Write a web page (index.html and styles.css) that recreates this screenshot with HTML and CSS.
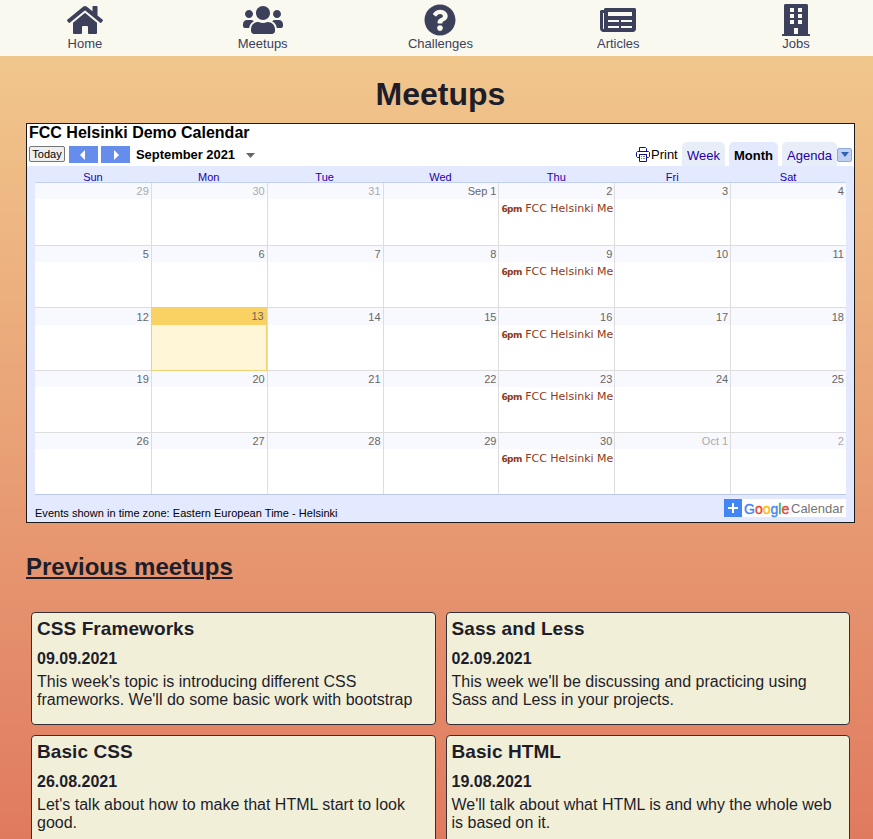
FILE: index.html
```html
<!DOCTYPE html>
<html lang="en">
<head>
<meta charset="utf-8">
<title>Meetups</title>
<link rel="stylesheet" href="styles.css">
</head>
<body>
<nav class="nav">
  <a class="nav-item"><svg viewBox="0 0 576 512" width="36" height="32"><path d="M280.37 148.26L96 300.11V464a16 16 0 0 0 16 16l112.06-.29a16 16 0 0 0 15.92-16V368a16 16 0 0 1 16-16h64a16 16 0 0 1 16 16v95.64a16 16 0 0 0 16 16.05L464 480a16 16 0 0 0 16-16V300L295.67 148.26a12.19 12.19 0 0 0-15.3 0zM571.6 251.47L488 182.56V44.05a12 12 0 0 0-12-12h-56a12 12 0 0 0-12 12v72.61L318.47 43a48 48 0 0 0-61 0L4.34 251.47a12 12 0 0 0-1.6 16.9l25.5 31A12 12 0 0 0 45.15 301l235.22-193.74a12.19 12.19 0 0 1 15.3 0L530.9 301a12 12 0 0 0 16.9-1.6l25.5-31a12 12 0 0 0-1.7-16.93z"/></svg><span>Home</span></a>
  <a class="nav-item"><svg viewBox="0 0 640 512" width="40" height="32"><path d="M96 224c35.3 0 64-28.7 64-64s-28.7-64-64-64-64 28.7-64 64 28.7 64 64 64zm448 0c35.3 0 64-28.7 64-64s-28.7-64-64-64-64 28.7-64 64 28.7 64 64 64zm32 32h-64c-17.6 0-33.5 7.1-45.1 18.6 40.3 22.1 68.9 62 75.1 109.4h66c17.7 0 32-14.3 32-32v-32c0-35.3-28.7-64-64-64zm-256 0c61.9 0 112-50.1 112-112S381.9 32 320 32 208 82.1 208 144s50.1 112 112 112zm76.8 32h-8.3c-20.8 10-43.9 16-68.5 16s-47.6-6-68.5-16h-8.3C179.6 288 128 339.6 128 403.2V432c0 26.5 21.5 48 48 48h288c26.5 0 48-21.5 48-48v-28.8c0-63.6-51.6-115.2-115.2-115.2zm-223.7-13.4C161.5 263.1 145.6 256 128 256H64c-35.3 0-64 28.7-64 64v32c0 17.7 14.3 32 32 32h65.9c6.3-47.4 34.9-87.3 75.2-109.4z"/></svg><span>Meetups</span></a>
  <a class="nav-item"><svg viewBox="0 0 512 512" width="32" height="32"><path d="M504 256c0 136.997-111.043 248-248 248S8 392.997 8 256C8 119.083 119.043 8 256 8s248 111.083 248 248zM262.655 90c-54.497 0-89.255 22.957-116.549 63.758-3.536 5.286-2.353 12.415 2.715 16.258l34.699 26.31c5.205 3.947 12.621 3.008 16.665-2.122 17.864-22.658 30.113-35.797 57.303-35.797 20.429 0 45.698 13.148 45.698 32.958 0 14.976-12.363 22.667-32.534 33.976C247.128 238.528 216 254.941 216 296v4c0 6.627 5.373 12 12 12h56c6.627 0 12-5.373 12-12v-1.333c0-28.462 83.186-29.647 83.186-106.667 0-58.002-60.165-102-116.531-102zM256 338c-25.365 0-46 20.635-46 46 0 25.364 20.635 46 46 46s46-20.636 46-46c0-25.365-20.635-46-46-46z"/></svg><span>Challenges</span></a>
  <a class="nav-item"><svg viewBox="0 0 576 512" width="36" height="32"><path d="M552 64H88c-13.255 0-24 10.745-24 24v8H24c-13.255 0-24 10.745-24 24v272c0 30.928 25.072 56 56 56h472c26.51 0 48-21.49 48-48V88c0-13.255-10.745-24-24-24zM56 400a8 8 0 0 1-8-8V144h16v248a8 8 0 0 1-8 8zM292 384H128v-32h176v32zM512 384H336v-32h176v32zM304 288H128v-32h176v32zM512 288H336v-32h176v32zM512 192H128v-64h384v64z" fill-rule="evenodd"/></svg><span>Articles</span></a>
  <a class="nav-item"><svg viewBox="0 0 448 512" width="28" height="32"><path d="M436 480h-20V24c0-13.255-10.745-24-24-24H56C42.745 0 32 10.745 32 24v456H12c-6.627 0-12 5.373-12 12v20h448v-20c0-6.627-5.373-12-12-12zM128 64h64v64h-64zM128 160h64v64h-64zM128 256h64v64h-64zM256 480h-64v-96h64zM320 320h-64v-64h64zM320 224h-64v-64h64zM320 128h-64V64h64z" fill-rule="evenodd"/></svg><span>Jobs</span></a>
</nav>
<main class="main">
  <h1>Meetups</h1>
  <section class="calendar">
    <div class="cal-title">FCC Helsinki Demo Calendar</div>
    <div class="toolbar">
      <span class="today-btn">Today</span>
      <span class="arrow"><svg width="29" height="17"><path d="M16 4v10l-5-5z"/></svg></span>
      <span class="arrow"><svg width="29" height="17"><path d="M13 4v10l5-5z"/></svg></span>
      <b class="range">September 2021</b>
      <svg class="caret" width="9" height="5"><path d="M0 0h9L4.500 5z"/></svg>
      <svg class="printer" width="14" height="15" viewBox="0 0 14 15"><path class="tray" d="M5 9.500h1m1 0h2M5 11.500h1m1 0h2"/><path d="M3.500 4.500v-4h6l1 1v3M3 10.500H1.500l-1-1v-4l1-1h11l1 1v4l-1 1H11M3 7.500h8M3.500 8v6.500h7V8"/></svg>
      <span class="print">Print</span>
      <span class="tab week">Week</span>
      <span class="tab month">Month</span>
      <span class="tab agenda">Agenda</span>
      <span class="drop"><svg width="8" height="5"><path d="M0 0h8L4 5z"/></svg></span>
    </div>
    <div class="cal-body">
      <div class="weekdays"><span>Sun</span><span>Mon</span><span>Tue</span><span>Wed</span><span>Thu</span><span>Fri</span><span>Sat</span></div>
      <div class="grid">
        <div class="day other"><p>29</p></div><div class="day other"><p>30</p></div><div class="day other"><p>31</p></div><div class="day"><p>Sep 1</p></div><div class="day"><p>2</p><div class="event"><b>6pm</b> FCC Helsinki Me</div></div><div class="day"><p>3</p></div><div class="day"><p>4</p></div>
        <div class="day"><p>5</p></div><div class="day"><p>6</p></div><div class="day"><p>7</p></div><div class="day"><p>8</p></div><div class="day"><p>9</p><div class="event"><b>6pm</b> FCC Helsinki Me</div></div><div class="day"><p>10</p></div><div class="day"><p>11</p></div>
        <div class="day"><p>12</p></div><div class="day current"><p>13</p></div><div class="day"><p>14</p></div><div class="day"><p>15</p></div><div class="day"><p>16</p><div class="event"><b>6pm</b> FCC Helsinki Me</div></div><div class="day"><p>17</p></div><div class="day"><p>18</p></div>
        <div class="day"><p>19</p></div><div class="day"><p>20</p></div><div class="day"><p>21</p></div><div class="day"><p>22</p></div><div class="day"><p>23</p><div class="event"><b>6pm</b> FCC Helsinki Me</div></div><div class="day"><p>24</p></div><div class="day"><p>25</p></div>
        <div class="day"><p>26</p></div><div class="day"><p>27</p></div><div class="day"><p>28</p></div><div class="day"><p>29</p></div><div class="day"><p>30</p><div class="event"><b>6pm</b> FCC Helsinki Me</div></div><div class="day other"><p>Oct 1</p></div><div class="day other"><p>2</p></div>
      </div>
      <div class="cal-footer">
        <span class="zone">Events shown in time zone: Eastern European Time - Helsinki</span>
        <span class="badge"><svg width="18" height="18"><path d="M9 4v10M4 9h10"/></svg><span class="google"><i class="b">G</i><i class="r">o</i><i class="y">o</i><i class="b">g</i><i class="g">l</i><i class="r">e</i></span><span class="word">Calendar</span></span>
      </div>
    </div>
  </section>
  <h2>Previous meetups</h2>
  <section class="cards">
    <article class="card"><h3>CSS Frameworks</h3><h4>09.09.2021</h4><p>This week's topic is introducing different CSS frameworks. We'll do some basic work with bootstrap</p></article>
    <article class="card"><h3>Sass and Less</h3><h4>02.09.2021</h4><p>This week we'll be discussing and practicing using Sass and Less in your projects.</p></article>
    <article class="card"><h3>Basic CSS</h3><h4>26.08.2021</h4><p>Let's talk about how to make that HTML start to look good.</p></article>
    <article class="card"><h3>Basic HTML</h3><h4>19.08.2021</h4><p>We'll talk about what HTML is and why the whole web is based on it.</p></article>
  </section>
</main>
</body>
</html>
```
FILE: styles.css
```css
* { box-sizing: border-box; margin: 0; padding: 0; }
body {
  height: 839px;
  overflow: hidden;
  font-family: "Liberation Sans", Arial, sans-serif;
  color: #1d1e2a;
  background: linear-gradient(#f2cc8f, #e07a5f);
}
.nav {
  display: grid;
  grid-template-columns: repeat(5, 177.8px);
  height: 56px;
  padding-top: 4px;
  background: #f9f9f0;
}
.nav-item { display: flex; flex-direction: column; align-items: center; margin-left: -4px; margin-right: 4px; color: #3d405b; font-size: 13px; line-height: 15px; }
.nav-item svg { display: block; fill: #3d405b; }
.main { padding: 0 18px 0 26px; }
h1 { font-size: 32px; line-height: 36px; text-align: center; padding: 20px 0 11px; }
.calendar { height: 400px; border: 1px solid #1a1a1a; background: #fff; color: #000; display: flex; flex-direction: column; }
.cal-title { font-size: 16px; font-weight: bold; line-height: 18px; height: 18px; padding-left: 2px; }
.toolbar { display: flex; height: 24px; align-items: center; padding: 0 2px; }
.today-btn { width: 36px; height: 16px; border: 1px solid #767676; border-radius: 2px; background: #efefef; font-size: 11px; line-height: 14px; text-align: center; }
.arrow { width: 29px; height: 17px; margin-left: 4px; background: #668cec; }
.arrow + .arrow { margin-left: 3px; }
.arrow svg { display: block; fill: #fff; }
.range { font-size: 13px; letter-spacing: -.05px; margin-left: 6px; width: 99px; white-space: nowrap; }
.caret { margin-left: 11px; fill: #666; position: relative; top: 1px; }
.printer { margin-left: auto; fill: none; stroke: #10109c; }
.printer .tray { stroke: #7c8088; }
.print { font-size: 13px; margin: 0 4px 0 1px; width: 27px; }
.tab { align-self: flex-end; height: 24px; border-radius: 5px 5px 0 0; background: #e8eef7; color: #20a; font-size: 13px; line-height: 27px; text-align: center; }
.week { width: 43px; margin-right: 4px; }
.month { width: 49px; margin-right: 4px; background: #e3e9ff; color: #000; font-weight: bold; }
.agenda { width: 55px; }
.drop { width: 15px; height: 14px; margin-top: 1px; border: 1px solid #8fa9dc; border-radius: 2px; background: #bfd0f3; display: flex; align-items: center; justify-content: center; }
.drop svg { fill: #3360b0; }
.cal-body { flex: 1; background: #e3e9ff; padding: 3px 8px 0; border-radius: 2px 2px 0 0; }
.weekdays { display: grid; grid-template-columns: repeat(7, 1fr); height: 13px; font-size: 11px; line-height: 17px; text-align: center; color: #20a; }
.grid { display: grid; grid-template-columns: repeat(7, 1fr); grid-template-rows: 62px 62px 63px 62px 62px; height: 313px; border-top: 1px solid #c3d0f5; border-bottom: 1px solid #b8c7ee; background: #fff; }
.day { min-width: 0; border-left: 1px solid #ddd; border-top: 1px solid #ddd; }
.day:nth-child(7n+1) { border-left: 0; }
.day:nth-child(-n+7) { border-top: 0; }
.day p { height: 16px; padding-right: 2px; background: #f8f9ff; color: #666; font-size: 11px; line-height: 16px; text-align: right; }
.day:nth-child(n+15):nth-child(-n+21) p { height: 17px; line-height: 18px; }
.day.other p { color: #aaa; }
.day.current { margin: 0 0 -1px; z-index: 1; border: 1px solid #f0d070; background: #fff6d8; }
.day.current:nth-child(n+15):nth-child(-n+21) p { background: #fad163; line-height: 17px; }
.event { padding: 1px 0 0 2px; margin-right: 1px; overflow: hidden; white-space: nowrap; color: #8d3a22; font: 11px/17px Verdana, "DejaVu Sans", sans-serif; letter-spacing: -.01px; }
.event b { font-size: 9px; letter-spacing: -.6px; }
.cal-footer { display: flex; justify-content: space-between; padding-top: 4px; }
.zone { font-size: 11px; letter-spacing: .03px; line-height: 28px; height: 18px; white-space: nowrap; }
.badge { display: flex; height: 18px; width: 122px; background: #fff; line-height: 20px; }
.badge svg { background: #4285f4; stroke: #fff; stroke-width: 2; }
.google { width: 47px; padding-left: 2px; font-size: 14px; -webkit-text-stroke: .35px; }
.google i { font-style: normal; }
.google .b { color: #4285f4; }
.google .r { color: #ea4335; }
.google .y { color: #fbbc05; }
.google .g { color: #34a853; }
.word { color: #757575; font-size: 13px; padding-left: 2px; }
h2 { font-size: 24px; line-height: 28px; text-decoration: underline; margin-top: 30px; }
.cards { display: grid; grid-template-columns: 1fr 1fr; grid-auto-rows: 113px; gap: 10px; margin: 31px 5px 0; }
.card { border: 1px solid #33303a; border-radius: 4px; background: #f2efd9; padding: 5px; }
h3 { font-size: 19px; letter-spacing: .08px; line-height: 22px; }
h4 { font-size: 16px; line-height: 18px; margin: 10px 0 5px; }
.card p { font-size: 16px; line-height: 18px; }
```
